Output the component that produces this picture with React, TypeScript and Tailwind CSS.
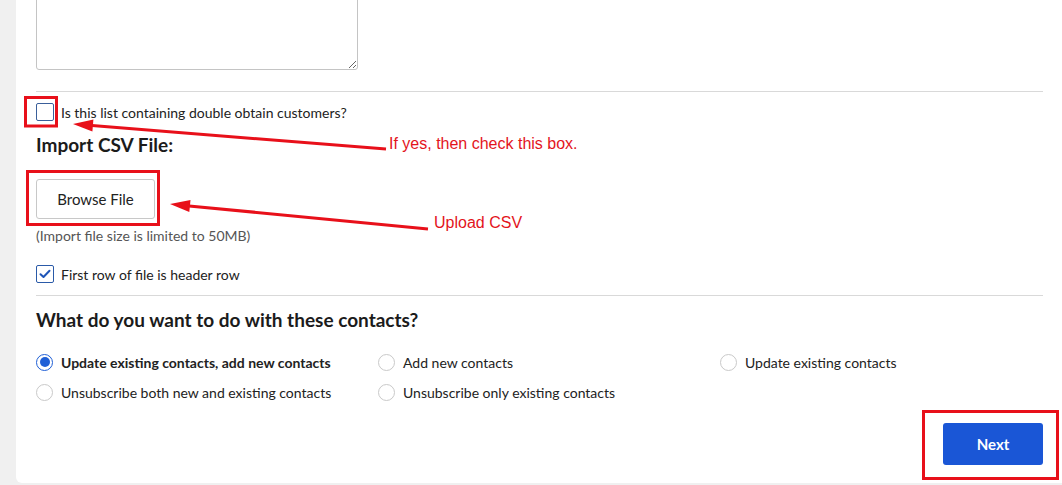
import React from "react";

function Radio({ checked, label }: { checked?: boolean; label: string }) {
  return (
    <div className="flex h-[20px] items-center gap-[8px]">
      {checked ? (
        <span className="flex h-[17px] w-[17px] items-center justify-center rounded-full border-[1.5px] border-[#1f5fd6] bg-white">
          <span className="h-[10px] w-[10px] rounded-full bg-[#1f5fd6]" />
        </span>
      ) : (
        <span className="h-[17px] w-[17px] rounded-full border border-[#c9c9c9] bg-white" />
      )}
      <span className={"text-[14px] text-[#222] " + (checked ? "font-bold" : "")}>{label}</span>
    </div>
  );
}

export default function App() {
  return (
    <div
      className="relative flex h-[485px] w-[1062px] overflow-hidden bg-[#f0f0f0]"
      style={{ fontFamily: "Lato, 'Noto Sans', sans-serif" }}
    >
      <div className="w-[16px] shrink-0" />
      <div className="flex h-[483px] flex-1 flex-col rounded-bl-[6px] bg-white pl-[20px] pr-[19px]">
        <textarea className="-mt-[21px] block h-[91px] w-[322px] shrink-0 rounded-[3px] border border-[#c4c4c4] bg-white" />
        <div className="mt-[21px] h-px shrink-0 bg-[#d9d9d9]" />
        <div className="mt-[11px] flex h-[18px] items-center gap-[7px]">
          <span className="h-[18px] w-[18px] rounded-[2px] border-[1.5px] border-[#3a5f9a] bg-white" />
          <span className="text-[14px] text-[#222]">Is this list containing double obtain customers?</span>
        </div>
        <div className="mt-[12px] h-[24px] text-[19px] font-bold leading-[24px] text-[#1b1b1b]">Import CSV File:</div>
        <div className="mt-[22px]">
          <button className="h-[40px] w-[119px] rounded-[3px] border border-[#c8c8c8] bg-white text-[15px] text-[#222]">
            Browse File
          </button>
        </div>
        <div className="mt-[9px] h-[16px] text-[14px] leading-[16px] text-[#555]">(Import file size is limited to 50MB)</div>
        <div className="mt-[21px] flex h-[18px] items-center gap-[7px]">
          <span className="flex h-[18px] w-[18px] items-center justify-center rounded-[2px] border-[1.5px] border-[#2a5aa8] bg-white">
            <svg width="12" height="10" viewBox="0 0 12 10" fill="none">
              <path d="M1.5 5.2 L4.5 8 L10.5 1.8" stroke="#1f55b8" strokeWidth="2" strokeLinecap="round" strokeLinejoin="round" />
            </svg>
          </span>
          <span className="text-[14px] text-[#222]">First row of file is header row</span>
        </div>
        <div className="mt-[12px] h-px shrink-0 bg-[#d9d9d9]" />
        <div className="mt-[11px] h-[26px] text-[19px] font-bold leading-[26px] text-[#1b1b1b]">
          What do you want to do with these contacts?
        </div>
        <div className="mt-[19px] grid grid-cols-[342px_342px_1fr] gap-y-[10px]">
          <Radio checked label="Update existing contacts, add new contacts" />
          <Radio label="Add new contacts" />
          <Radio label="Update existing contacts" />
          <Radio label="Unsubscribe both new and existing contacts" />
          <Radio label="Unsubscribe only existing contacts" />
          <div />
        </div>
        <div className="mt-[21px] flex justify-end">
          <button className="h-[42px] w-[100px] rounded-[3px] bg-[#1a56d6] text-[15px] font-bold text-white">Next</button>
        </div>
      </div>

      <svg className="pointer-events-none absolute left-0 top-0" width="1062" height="485" viewBox="0 0 1062 485">
        <rect x="25.5" y="97.5" width="31" height="28.5" fill="none" stroke="#e8101a" strokeWidth="3" />
        <rect x="27.5" y="171.5" width="131" height="53" fill="none" stroke="#e8101a" strokeWidth="3" />
        <rect x="923.5" y="411.5" width="134" height="67" fill="none" stroke="#e8101a" strokeWidth="3" />
        <line x1="386" y1="149" x2="92" y2="125.6" stroke="#e8101a" strokeWidth="3" />
        <polygon points="73,124 93.4,119.6 92.4,131.6" fill="#e8101a" />
        <line x1="428" y1="229" x2="189" y2="205.9" stroke="#e8101a" strokeWidth="3" />
        <polygon points="170,204 190.5,199.9 189.3,211.9" fill="#e8101a" />
      </svg>
      <div
        className="pointer-events-none absolute left-[389px] top-[136px] whitespace-nowrap text-[16px] leading-[16px] text-[#e3141c]"
        style={{ fontFamily: "'Liberation Sans', Arial, sans-serif" }}
      >
        If yes, then check this box.
      </div>
      <div
        className="pointer-events-none absolute left-[434px] top-[215px] whitespace-nowrap text-[16px] leading-[16px] text-[#e3141c]"
        style={{ fontFamily: "'Liberation Sans', Arial, sans-serif" }}
      >
        Upload CSV
      </div>
    </div>
  );
}
